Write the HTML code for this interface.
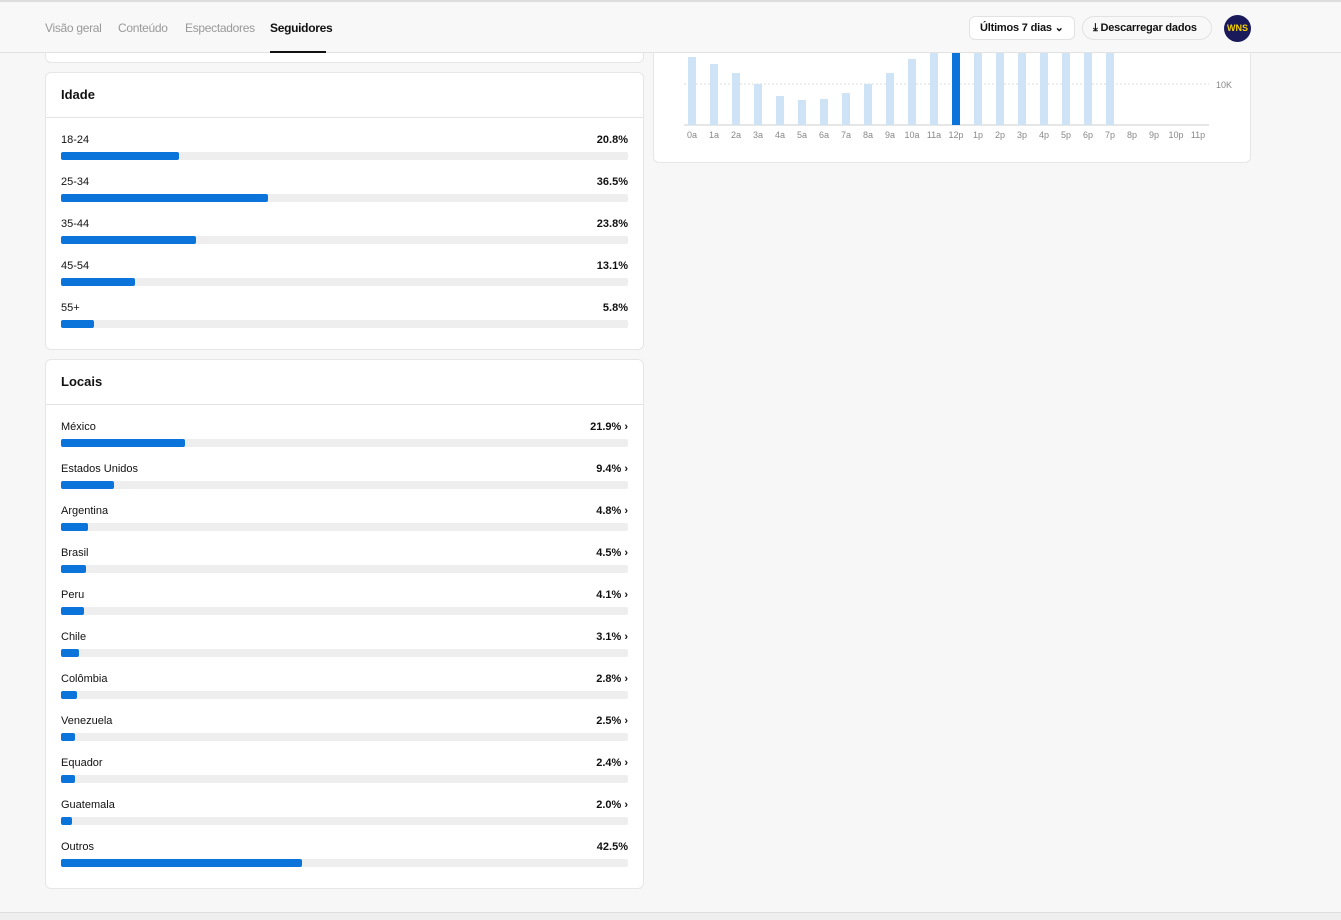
<!DOCTYPE html><html><head><meta charset="utf-8"><style>
*{box-sizing:border-box;margin:0;padding:0}
body{width:1341px;height:920px;background:#f7f7f7;font-family:"Liberation Sans",sans-serif;position:relative;overflow:hidden;color:#111}
.hdr{position:absolute;left:0;top:0;width:1341px;height:53px;background:#f8f8f8;border-top:2px solid #ddd;border-bottom:1px solid #e2e2e2;z-index:5}
.tab{position:absolute;top:19px;font-size:12px;color:#999;letter-spacing:-.3px}
.tab.on{color:#111;font-weight:bold}
.card{position:absolute;background:#fff;border:1px solid #e6e6e6;border-radius:6px}
.ttl{position:absolute;left:15px;font-size:13px;font-weight:bold}
.div{position:absolute;left:0;right:0;height:1px;background:#e3e3e3}
.row{position:absolute;left:15px;width:567px;font-size:11px}
.row .l{position:absolute;left:0;top:1px}
.row .p{position:absolute;right:0;top:1px;font-weight:bold}
.row .t{position:absolute;left:0;top:19px;width:567px;height:8px;background:#eee;border-radius:2px}
.row .f{height:8px;background:#0a74da;border-radius:2px}
.btn{position:absolute;top:14px;height:24px;border:1px solid #e2e2e2;border-radius:6px;background:#fff;font-size:11px;font-weight:bold;line-height:22px;padding:0 10px;white-space:nowrap;letter-spacing:-.2px}
</style></head><body>
<div class="hdr">
<div class="tab" style="left:45px">Visão geral</div>
<div class="tab" style="left:118px">Conteúdo</div>
<div class="tab" style="left:185px">Espectadores</div>
<div class="tab on" style="left:270px">Seguidores</div>
<div style="position:absolute;left:270px;top:49px;width:56px;height:2px;background:#111"></div>
<div class="btn" style="left:969px;width:106px">Últimos 7 dias ⌄</div>
<div class="btn" style="left:1082px;width:130px;border-radius:12px;background:#f8f8f8">⤓ Descarregar dados</div>
<div style="position:absolute;left:1224px;top:13px;width:27px;height:27px;border-radius:50%;background:#1a1a5a;color:#f5d000;font-size:9px;font-weight:bold;text-align:center;line-height:27px">WNS</div>
</div>
<div class="card" style="left:45px;top:30px;width:599px;height:33px"></div>
<div class="card" style="left:653px;top:20px;width:598px;height:143px">
<svg width="598" height="143" style="position:absolute;left:0;top:0">
<line x1="30" y1="63" x2="555" y2="63" stroke="#ddd" stroke-dasharray="2,2"/>
<line x1="30" y1="104" x2="555" y2="104" stroke="#ccc"/>
<g fill="#cfe3f7">
<rect x="34" y="36" width="8" height="68"/><rect x="56" y="43" width="8" height="61"/><rect x="78" y="52" width="8" height="52"/><rect x="100" y="63" width="8" height="41"/><rect x="122" y="75" width="8" height="29"/><rect x="144" y="79" width="8" height="25"/><rect x="166" y="78" width="8" height="26"/><rect x="188" y="72" width="8" height="32"/><rect x="210" y="63" width="8" height="41"/><rect x="232" y="52" width="8" height="52"/><rect x="254" y="38" width="8" height="66"/><rect x="276" y="20" width="8" height="84"/><rect x="320" y="20" width="8" height="84"/><rect x="342" y="20" width="8" height="84"/><rect x="364" y="20" width="8" height="84"/><rect x="386" y="20" width="8" height="84"/><rect x="408" y="20" width="8" height="84"/><rect x="430" y="20" width="8" height="84"/><rect x="452" y="20" width="8" height="84"/>
</g><rect x="298" y="20" width="8" height="84" fill="#0a74da"/>
<text x="562" y="67" font-size="9" fill="#888" font-family="Liberation Sans">10K</text>
<g font-size="9" fill="#888" font-family="Liberation Sans" text-anchor="middle">
<text x="38" y="117">0a</text><text x="60" y="117">1a</text><text x="82" y="117">2a</text><text x="104" y="117">3a</text><text x="126" y="117">4a</text><text x="148" y="117">5a</text><text x="170" y="117">6a</text><text x="192" y="117">7a</text><text x="214" y="117">8a</text><text x="236" y="117">9a</text><text x="258" y="117">10a</text><text x="280" y="117">11a</text><text x="302" y="117">12p</text><text x="324" y="117">1p</text><text x="346" y="117">2p</text><text x="368" y="117">3p</text><text x="390" y="117">4p</text><text x="412" y="117">5p</text><text x="434" y="117">6p</text><text x="456" y="117">7p</text><text x="478" y="117">8p</text><text x="500" y="117">9p</text><text x="522" y="117">10p</text><text x="544" y="117">11p</text>
</g></svg></div>
<div class="card" style="left:45px;top:72px;width:599px;height:278px">
<div class="ttl" style="top:14px">Idade</div><div class="div" style="top:44px"></div>
<div class="row" style="top:60px"><span class="l">18-24</span><span class="p">20.8%</span><div class="t"><div class="f" style="width:118px"></div></div></div>
<div class="row" style="top:102px"><span class="l">25-34</span><span class="p">36.5%</span><div class="t"><div class="f" style="width:207px"></div></div></div>
<div class="row" style="top:144px"><span class="l">35-44</span><span class="p">23.8%</span><div class="t"><div class="f" style="width:135px"></div></div></div>
<div class="row" style="top:186px"><span class="l">45-54</span><span class="p">13.1%</span><div class="t"><div class="f" style="width:74px"></div></div></div>
<div class="row" style="top:228px"><span class="l">55+</span><span class="p">5.8%</span><div class="t"><div class="f" style="width:33px"></div></div></div>
</div>
<div class="card" style="left:45px;top:359px;width:599px;height:530px">
<div class="ttl" style="top:14px">Locais</div><div class="div" style="top:44px"></div>
<div class="row" style="top:60px"><span class="l">México</span><span class="p">21.9% ›</span><div class="t"><div class="f" style="width:124px"></div></div></div>
<div class="row" style="top:102px"><span class="l">Estados Unidos</span><span class="p">9.4% ›</span><div class="t"><div class="f" style="width:53px"></div></div></div>
<div class="row" style="top:144px"><span class="l">Argentina</span><span class="p">4.8% ›</span><div class="t"><div class="f" style="width:27px"></div></div></div>
<div class="row" style="top:186px"><span class="l">Brasil</span><span class="p">4.5% ›</span><div class="t"><div class="f" style="width:25px"></div></div></div>
<div class="row" style="top:228px"><span class="l">Peru</span><span class="p">4.1% ›</span><div class="t"><div class="f" style="width:23px"></div></div></div>
<div class="row" style="top:270px"><span class="l">Chile</span><span class="p">3.1% ›</span><div class="t"><div class="f" style="width:18px"></div></div></div>
<div class="row" style="top:312px"><span class="l">Colômbia</span><span class="p">2.8% ›</span><div class="t"><div class="f" style="width:16px"></div></div></div>
<div class="row" style="top:354px"><span class="l">Venezuela</span><span class="p">2.5% ›</span><div class="t"><div class="f" style="width:14px"></div></div></div>
<div class="row" style="top:396px"><span class="l">Equador</span><span class="p">2.4% ›</span><div class="t"><div class="f" style="width:14px"></div></div></div>
<div class="row" style="top:438px"><span class="l">Guatemala</span><span class="p">2.0% ›</span><div class="t"><div class="f" style="width:11px"></div></div></div>
<div class="row" style="top:480px"><span class="l">Outros</span><span class="p">42.5%</span><div class="t"><div class="f" style="width:241px"></div></div></div>
</div>
<div style="position:absolute;left:0;top:912px;width:1341px;height:8px;background:#eee;border-top:1px solid #ddd"></div>
</body></html>
